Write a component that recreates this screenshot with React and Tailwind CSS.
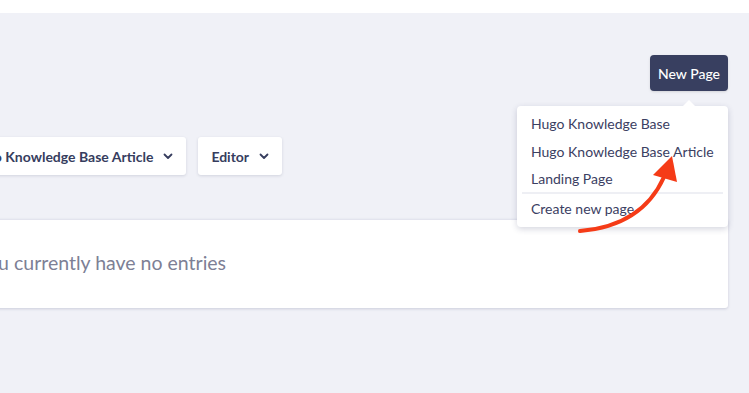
import React from "react";

const Chevron = () => (
  <svg width="12" height="12" viewBox="0 0 12 12" fill="none" className="ml-[9px]">
    <path d="M2.5 4.5 L6 8 L9.5 4.5" stroke="#363d5e" strokeWidth="1.8" strokeLinecap="round" strokeLinejoin="round" />
  </svg>
);

export default function App() {
  return (
    <div className="relative w-[749px] h-[393px] overflow-hidden bg-[#f0f1f7]" style={{ fontFamily: "Lato, 'Open Sans', sans-serif" }}>
      <div className="h-[13px] bg-white" />
      <div className="ml-[-48px] mr-[21px]">
        <div className="flex justify-end pt-[42px]">
          <button className="h-[36px] px-[8px] rounded-[4px] bg-[#383f60] text-white text-[14px] font-medium shadow-sm">
            New Page
          </button>
        </div>
        <div className="flex gap-[12px] mt-[46px]">
          <div className="h-[38px] flex items-center pl-[16px] pr-[12px] bg-white rounded-[3px] shadow-[0_1px_3px_rgba(40,45,90,0.15)] text-[14px] font-bold text-[#363d5e]">
            Hugo Knowledge Base Article <Chevron />
          </div>
          <div className="h-[38px] flex items-center pl-[13px] pr-[12px] bg-white rounded-[3px] shadow-[0_1px_3px_rgba(40,45,90,0.15)] text-[14px] font-bold text-[#363d5e]">
            Editor <Chevron />
          </div>
        </div>
        <div className="mt-[44px] h-[89px] bg-white border-t border-[#e3e4ee] rounded-[3px] shadow-[0_1px_3px_rgba(40,45,90,0.18)] flex items-center pl-[25px] pb-[3px]">
          <span className="text-[19.5px] text-[#7d8095]">You currently have no entries</span>
        </div>
      </div>

      {/* dropdown menu */}
      <div className="absolute left-[517px] top-[106px] w-[211px] bg-white rounded-[4px] shadow-[0_2px_6px_rgba(40,45,90,0.2)] pt-[4px] pb-[5px]">
        <div className="absolute top-[-6px] left-[165px] w-0 h-0 border-l-[7px] border-r-[7px] border-b-[7px] border-l-transparent border-r-transparent border-b-white" />
        <div className="px-[14px] text-[14px] text-[#3b4062]">
          <div className="h-[27px] flex items-center">Hugo Knowledge Base</div>
          <div className="h-[28px] flex items-center">Hugo Knowledge Base Article</div>
          <div className="h-[27px] flex items-center">Landing Page</div>
        </div>
        <div className="mx-[5px] h-[2px] bg-[#eeeff4]" />
        <div className="px-[14px] text-[14px] text-[#3b4062]">
          <div className="h-[28px] flex items-center">Create new page</div>
        </div>
      </div>

      {/* red arrow */}
      <svg className="absolute left-0 top-0 pointer-events-none" width="749" height="393">
        <path d="M580 231 Q642 226 664 177" stroke="#f53b17" strokeWidth="4" fill="none" strokeLinecap="round" />
        <polygon points="672,156 653,175 677,182" fill="#f53b17" />
      </svg>
    </div>
  );
}
